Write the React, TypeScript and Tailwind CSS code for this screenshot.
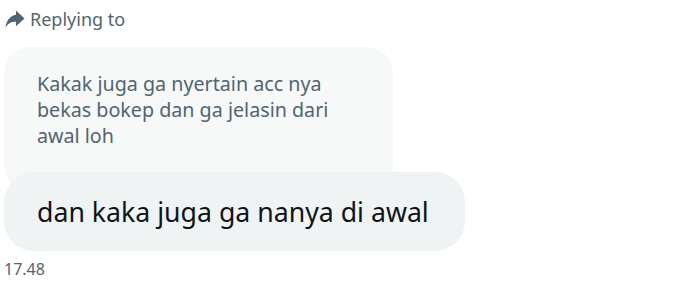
export default function App() {
  return (
    <div className="w-[690px] h-[294px] bg-white overflow-hidden font-['Noto_Sans',sans-serif]">
      <div className="flex flex-col items-start pl-[4px] pt-[8px]">
        {/* Replying to */}
        <div className="flex items-center gap-[5px] pl-[1px] text-[#536471]">
          <svg viewBox="0 0 20 18" className="w-[20px] h-[18px]" fill="currentColor">
            <path d="M11 0.5 L19.5 8.5 L11 16.2 V11.8 C6 11.6 2.8 13.6 0.5 17.5 C1.2 11 5 5.6 11 4.8 Z" />
          </svg>
          <span className="text-[18px] leading-[22px]">Replying to</span>
        </div>

        {/* Quoted message */}
        <div className="mt-[17px] w-[389px] rounded-[26px] bg-[#f7f9f9] pl-[33px] pr-[24px] pt-[24px] pb-[42px]">
          <p className="text-[19.7px] leading-[26px] text-[#536471]">
            Kakak juga ga nyertain acc nya bekas bokep dan ga jelasin dari awal loh
          </p>
        </div>

        {/* Reply */}
        <div className="relative -mt-[19px] rounded-[30px] bg-[#eff3f4] pl-[33px] pr-[36px] h-[79px] flex items-center">
          <span className="text-[26.7px] leading-[32px] text-[#0f1419]">dan kaka juga ga nanya di awal</span>
        </div>

        <span className="mt-[9px] text-[16px] leading-[18px] text-[#536471]">17.48</span>
      </div>
    </div>
  );
}
